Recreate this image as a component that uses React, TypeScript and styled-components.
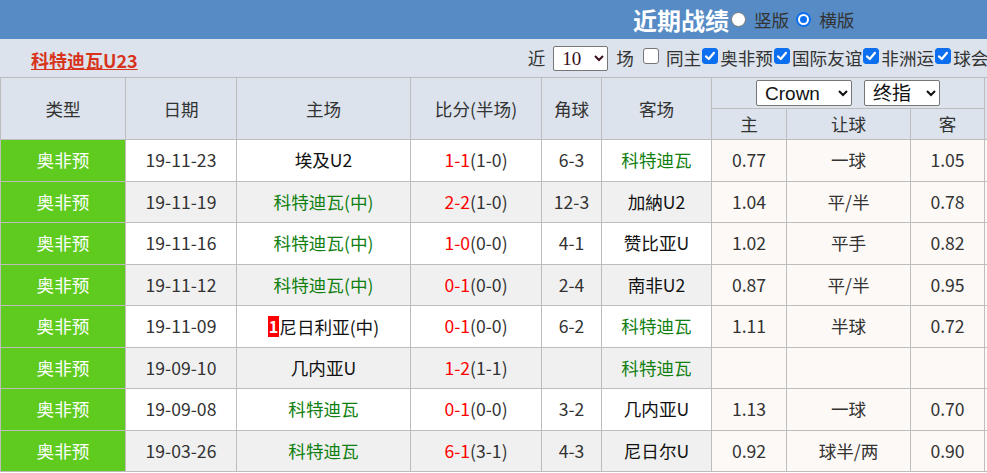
import React from 'react';
import styled, { createGlobalStyle } from 'styled-components';

const GlobalStyle = createGlobalStyle`
  html, body {
    margin: 0;
    padding: 0;
    overflow: hidden;
    background: #fff;
  }
  body {
    font-family: "Noto Sans CJK SC", "Noto Sans", sans-serif;
    color: #333;
  }
`;

const Page = styled.div`
  width: 1060px;
`;

const TitleBar = styled.div`
  height: 39px;
  background: #568bc5;
  display: flex;
  align-items: center;
  padding-left: 633px;
`;

const Title = styled.h2`
  margin: 0 2px 0 0;
  font-size: 24px;
  font-weight: 700;
  color: #fff;
  line-height: 1;
`;

const ChoiceLabel = styled.label`
  display: flex;
  align-items: center;
  font-size: 17.6px;
  line-height: 1;
  color: #333;
  white-space: nowrap;
`;

const RadioDot = styled.span<{ $on: boolean; $lead?: number }>`
  box-sizing: border-box;
  flex-shrink: 0;
  width: 15px;
  height: 15px;
  border-radius: 50%;
  margin: 0 8px 0 ${(p) => p.$lead ?? 0}px;
  background: #fff;
  border: ${(p) => (p.$on ? '2px solid #0b6ff0' : '1px solid #767676')};
  display: flex;
  align-items: center;
  justify-content: center;
  &::after {
    content: '';
    display: ${(p) => (p.$on ? 'block' : 'none')};
    width: 7px;
    height: 7px;
    border-radius: 50%;
    background: #0b6ff0;
  }
`;

const Toolbar = styled.div`
  height: 38px;
  background: #dce3ed;
  display: flex;
  align-items: center;
`;

const TeamTitle = styled.a`
  flex-shrink: 0;
  margin-left: 31px;
  font-size: 18px;
  font-weight: 700;
  color: #d8341c;
  text-decoration: underline;
  line-height: 1;
  position: relative;
  top: 2px;
`;

const Filters = styled.div`
  flex-shrink: 0;
  margin-left: 390px;
  display: flex;
  align-items: center;
  font-size: 17.6px;
  line-height: 1;
  white-space: nowrap;
`;

const CountSelect = styled.select`
  flex-shrink: 0;
  margin: 0 8px 0 8px;
  width: 55px;
  height: 25px;
  font-family: "Liberation Serif", serif;
  font-size: 19px;
  color: #3a1020;
  background: #fff;
  border: 1px solid #767676;
  border-radius: 2px;
  padding: 0 0 0 4px;
`;

const CheckBox = styled.span<{ $on: boolean; $lead?: number; $trail?: number }>`
  box-sizing: border-box;
  flex-shrink: 0;
  width: 16px;
  height: 16px;
  border-radius: 3px;
  margin: 0 ${(p) => p.$trail ?? 2}px 0 ${(p) => p.$lead ?? 1}px;
  background: ${(p) => (p.$on ? '#0b6ff0' : '#fff')};
  border: 1px solid ${(p) => (p.$on ? '#0b6ff0' : '#767676')};
  display: flex;
  align-items: center;
  justify-content: center;
  position: relative;
  top: -2px;
`;

const Table = styled.table`
  border-collapse: collapse;
  table-layout: fixed;
  width: 1044px;
  font-size: 17.6px;
  line-height: 1;
`;

const HeadCell = styled.th`
  background: #dce3ed;
  border: 1px solid #bdbdbd;
  font-weight: 400;
  color: #333;
  padding: 0;
  height: 30px;
`;

const OddsSelect = styled.select<{ $w: number }>`
  width: ${(p) => p.$w}px;
  height: 26px;
  margin: 0 6px;
  font-family: "Liberation Sans", "Noto Sans CJK SC", sans-serif;
  font-size: 19px;
  color: #111;
  background: #fff;
  border: 1px solid #767676;
  border-radius: 2px;
  padding: 0 0 0 4px;
  vertical-align: middle;
`;

const Row = styled.tr<{ $alt: boolean }>`
  height: 41.5px;
  background: ${(p) => (p.$alt ? '#f0f0f0' : '#fff')};
`;

const Cell = styled.td<{ $tone?: 'type' | 'odds' }>`
  border: 1px solid #bdbdbd;
  padding: 0;
  text-align: center;
  white-space: nowrap;
  overflow: hidden;
  color: ${(p) => (p.$tone === 'type' ? '#fff' : '#333')};
  background: ${(p) =>
    p.$tone === 'type' ? '#5fcb1e' : p.$tone === 'odds' ? '#fdf9f6' : 'transparent'};
`;

const TeamName = styled.span<{ $own: boolean }>`
  color: ${(p) => (p.$own ? '#118011' : '#111')};
`;

const RankBadge = styled.span`
  display: inline-block;
  background: #f00;
  color: #fff;
  font-weight: 700;
  font-size: 16px;
  line-height: 21px;
  padding: 0 1px;
  vertical-align: 1px;
`;

const Score = styled.span`
  color: #f00;
`;

type Match = {
  date: string;
  home: string;
  homeOwn: boolean;
  rank?: string;
  score: string;
  half: string;
  corner: string;
  away: string;
  awayOwn: boolean;
  odds?: [string, string, string];
};

const matches: Match[] = [
  { date: '19-11-23', home: '埃及U2', homeOwn: false, score: '1-1', half: '(1-0)', corner: '6-3', away: '科特迪瓦', awayOwn: true, odds: ['0.77', '一球', '1.05'] },
  { date: '19-11-19', home: '科特迪瓦(中)', homeOwn: true, score: '2-2', half: '(1-0)', corner: '12-3', away: '加納U2', awayOwn: false, odds: ['1.04', '平/半', '0.78'] },
  { date: '19-11-16', home: '科特迪瓦(中)', homeOwn: true, score: '1-0', half: '(0-0)', corner: '4-1', away: '赞比亚U', awayOwn: false, odds: ['1.02', '平手', '0.82'] },
  { date: '19-11-12', home: '科特迪瓦(中)', homeOwn: true, score: '0-1', half: '(0-0)', corner: '2-4', away: '南非U2', awayOwn: false, odds: ['0.87', '平/半', '0.95'] },
  { date: '19-11-09', home: '尼日利亚(中)', homeOwn: false, rank: '1', score: '0-1', half: '(0-0)', corner: '6-2', away: '科特迪瓦', awayOwn: true, odds: ['1.11', '半球', '0.72'] },
  { date: '19-09-10', home: '几内亚U', homeOwn: false, score: '1-2', half: '(1-1)', corner: '', away: '科特迪瓦', awayOwn: true },
  { date: '19-09-08', home: '科特迪瓦', homeOwn: true, score: '0-1', half: '(0-0)', corner: '3-2', away: '几内亚U', awayOwn: false, odds: ['1.13', '一球', '0.70'] },
  { date: '19-03-26', home: '科特迪瓦', homeOwn: true, score: '6-1', half: '(3-1)', corner: '4-3', away: '尼日尔U', awayOwn: false, odds: ['0.92', '球半/两', '0.90'] },
];

const colWidths = [125, 111, 174, 131, 60, 110, 75, 124, 74, 60];

function Tick({ on, lead, trail }: { on: boolean; lead?: number; trail?: number }) {
  return (
    <CheckBox $on={on} $lead={lead} $trail={trail} role="checkbox" aria-checked={on}>
      {on && (
        <svg width="12" height="12" viewBox="0 0 12 12">
          <path d="M2 6.4 L4.8 9 L10 2.8" fill="none" stroke="#fff" strokeWidth="2.2" strokeLinecap="round" strokeLinejoin="round" />
        </svg>
      )}
    </CheckBox>
  );
}

export default function App() {
  return (
    <Page>
      <GlobalStyle />
      <TitleBar>
        <Title>近期战绩</Title>
        <ChoiceLabel>
          <RadioDot $on={false} />
          竖版
        </ChoiceLabel>
        <ChoiceLabel>
          <RadioDot $on $lead={7} />
          横版
        </ChoiceLabel>
      </TitleBar>

      <Toolbar>
        <TeamTitle>科特迪瓦U23</TeamTitle>
        <Filters>
          近
          <CountSelect defaultValue="10">
            <option>6</option>
            <option>10</option>
            <option>20</option>
          </CountSelect>
          场
          <Tick on={false} lead={9} trail={7} />
          同主
          <Tick on />
          奥非预
          <Tick on />
          国际友谊
          <Tick on />
          非洲运
          <Tick on />
          球会
        </Filters>
      </Toolbar>

      <Table>
        <colgroup>
          {colWidths.map((w, i) => (
            <col key={i} style={{ width: w }} />
          ))}
        </colgroup>
        <thead>
          <tr>
            <HeadCell rowSpan={2}>类型</HeadCell>
            <HeadCell rowSpan={2}>日期</HeadCell>
            <HeadCell rowSpan={2}>主场</HeadCell>
            <HeadCell rowSpan={2}>比分(半场)</HeadCell>
            <HeadCell rowSpan={2}>角球</HeadCell>
            <HeadCell rowSpan={2}>客场</HeadCell>
            <HeadCell colSpan={3}>
              <OddsSelect $w={96} defaultValue="Crown">
                <option>Crown</option>
                <option>澳门</option>
              </OddsSelect>
              <OddsSelect $w={76} defaultValue="终指">
                <option>终指</option>
                <option>初指</option>
              </OddsSelect>
            </HeadCell>
            <HeadCell rowSpan={2}></HeadCell>
          </tr>
          <tr>
            <HeadCell>主</HeadCell>
            <HeadCell>让球</HeadCell>
            <HeadCell>客</HeadCell>
          </tr>
        </thead>
        <tbody>
          {matches.map((m, i) => (
            <Row key={m.date} $alt={i % 2 === 1}>
              <Cell $tone="type">奥非预</Cell>
              <Cell>{m.date}</Cell>
              <Cell>
                {m.rank && <RankBadge>{m.rank}</RankBadge>}
                <TeamName $own={m.homeOwn}>{m.home}</TeamName>
              </Cell>
              <Cell>
                <Score>{m.score}</Score>
                {m.half}
              </Cell>
              <Cell>{m.corner}</Cell>
              <Cell>
                <TeamName $own={m.awayOwn}>{m.away}</TeamName>
              </Cell>
              <Cell $tone="odds">{m.odds?.[0]}</Cell>
              <Cell $tone="odds">{m.odds?.[1]}</Cell>
              <Cell $tone="odds">{m.odds?.[2]}</Cell>
              <Cell $tone="odds"></Cell>
            </Row>
          ))}
        </tbody>
      </Table>
    </Page>
  );
}
